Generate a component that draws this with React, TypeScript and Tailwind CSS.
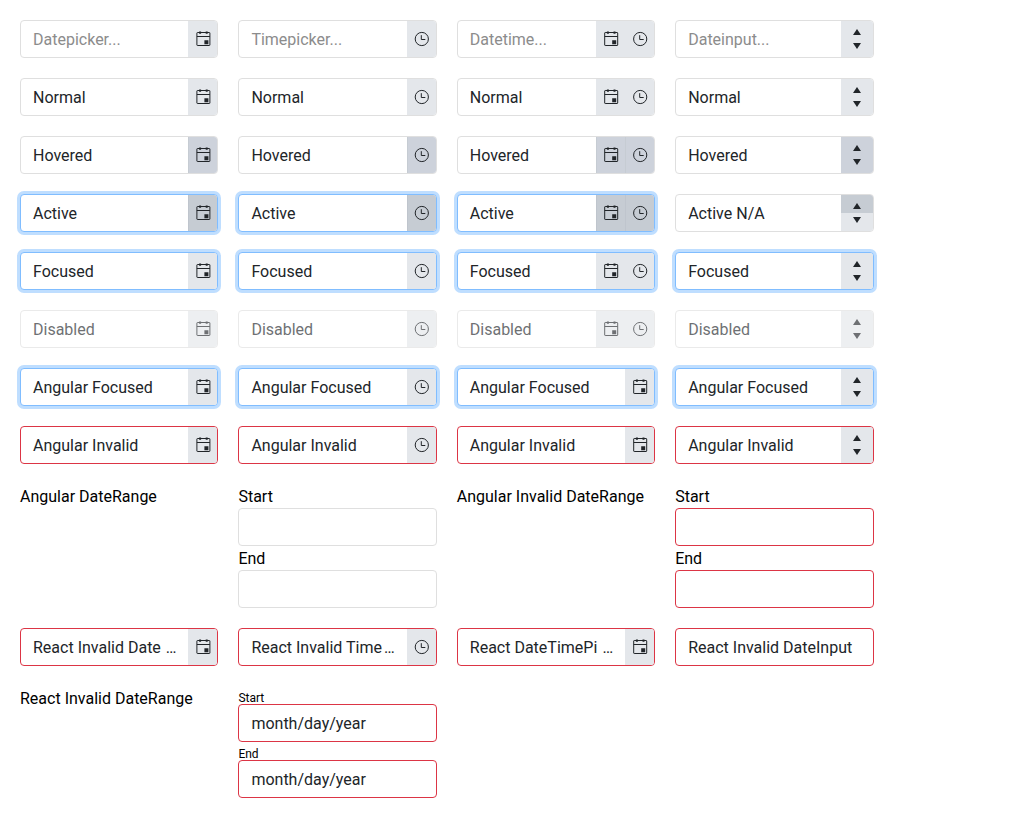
import type { ReactNode } from 'react';
import clsx from 'clsx';

type State = 'placeholder' | 'normal' | 'hovered' | 'active' | 'focused' | 'disabled' | 'invalid';
type Kind = 'date' | 'time' | 'datetime' | 'spin' | 'plain';

// Sub-pixel remainder of each column's icon position.
const iconShift = [0.4, -0.2, 0.2, 0];

const CalendarIcon = ({ shift }: { shift: number }) => (
  <svg className="block size-4 shrink-0 overflow-visible" viewBox="0 0 16 16" fill="currentColor">
    <g transform={`translate(${shift} 0)`}>
      <rect x="1.500" y="1.500" width="13" height="13" rx=".5" fill="none" stroke="currentColor" />
      <path d="M1.500 5h13v1h-13zM3.700 .5h2v2.200h-2zM10.300 .5h2v2.200h-2zM9 9.200h4v4H9z" />
    </g>
  </svg>
);

const ClockIcon = ({ shift }: { shift: number }) => (
  <svg className="block size-4 shrink-0 overflow-visible" viewBox="0 0 16 16" fill="none" stroke="currentColor">
    <g transform={`translate(${shift} 0)`}>
      <circle cx="8" cy="8" r="6.600" />
      <path d="M7.500 4.200v4.300H11.500" />
    </g>
  </svg>
);

const face: Record<State, string> = {
  placeholder: 'bg-[#e4e7eb] border-[#e4e7eb]',
  normal: 'bg-[#e4e7eb] border-[#e4e7eb]',
  focused: 'bg-[#e4e7eb] border-[#e4e7eb]',
  disabled: 'bg-[#e4e7eb] border-[#e4e7eb]',
  invalid: 'bg-[#e4e7eb] border-[#e4e7eb]',
  hovered: 'bg-[#cdd2db] border-[#c6ccd3]',
  active: 'bg-[#c6ccd3] border-[#bfc5cd]',
};

const frame: Record<State, string> = {
  placeholder: 'border-[#dfdfdf]',
  normal: 'border-[#dfdfdf]',
  hovered: 'border-[#dfdfdf]',
  disabled: 'border-[#dfdfdf] opacity-65',
  active: 'border-[#80bdff] shadow-[0_0_0_3px_#bfdeff]',
  focused: 'border-[#80bdff] shadow-[0_0_0_3px_#bfdeff]',
  invalid: 'border-[#dc3545]',
};

const Button = ({ state, children }: { state: State; children: ReactNode }) => (
  <div className={clsx('flex w-[29px] shrink-0 items-center justify-center border-l', face[state])}>
    {children}
  </div>
);

const Spinner = ({ state, upOnly }: { state: State; upOnly?: boolean }) => (
  <div className={clsx('flex w-8 shrink-0 flex-col', face[state])}>
    <div className={clsx('flex flex-1 items-end justify-center pb-1', upOnly && 'bg-[#c6ccd3]')}>
      <svg className="block h-1.5 w-2" viewBox="0 0 8 6" fill="currentColor">
        <path d="M4 0L8 6H0z" />
      </svg>
    </div>
    <div className="flex flex-1 items-start justify-center pt-1">
      <svg className="block h-1.5 w-2" viewBox="0 0 8 6" fill="currentColor">
        <path d="M0 0h8L4 6z" />
      </svg>
    </div>
  </div>
);

interface FieldProps {
  text?: string;
  state?: State;
  kind?: Kind;
  clipped?: boolean;
  upOnly?: boolean;
  shift?: number;
}

const Field = ({ text, state = 'normal', kind = 'plain', clipped, upOnly, shift = 0 }: FieldProps) => (
  <div className={clsx('flex h-[38px] overflow-hidden rounded border bg-white text-[#212529]', frame[state])}>
    <div
      className={clsx(
        'flex min-w-0 flex-1 items-center justify-between px-3 pt-0.5 whitespace-nowrap',
        state === 'placeholder' && 'text-[#8c8c8c]',
      )}
    >
      <span>{text}</span>
      {clipped && <span>…</span>}
    </div>
    {(kind === 'date' || kind === 'datetime') && <Button state={state}><CalendarIcon shift={shift} /></Button>}
    {(kind === 'time' || kind === 'datetime') && <Button state={state}><ClockIcon shift={shift} /></Button>}
    {kind === 'spin' && <Spinner state={state} upOnly={upOnly} />}
  </div>
);

const allKinds: Kind[] = ['date', 'time', 'datetime', 'spin'];
const angularKinds: Kind[] = ['date', 'time', 'date', 'spin'];

const makeRow = (text: string, state: State, kinds: Kind[]): FieldProps[] =>
  kinds.map((kind) => ({ text, state, kind }));

const rows: FieldProps[][] = [
  [
    { text: 'Datepicker...', state: 'placeholder', kind: 'date' },
    { text: 'Timepicker...', state: 'placeholder', kind: 'time' },
    { text: 'Datetime...', state: 'placeholder', kind: 'datetime' },
    { text: 'Dateinput...', state: 'placeholder', kind: 'spin' },
  ],
  makeRow('Normal', 'normal', allKinds),
  makeRow('Hovered', 'hovered', allKinds),
  [
    ...makeRow('Active', 'active', ['date', 'time', 'datetime']),
    { text: 'Active N/A', state: 'normal', kind: 'spin', upOnly: true },
  ],
  makeRow('Focused', 'focused', allKinds),
  makeRow('Disabled', 'disabled', allKinds),
  makeRow('Angular Focused', 'focused', angularKinds),
  makeRow('Angular Invalid', 'invalid', angularKinds),
];

const Label = ({ children }: { children: ReactNode }) => <div className="h-6 leading-[26px]">{children}</div>;

const Range = ({ state, text, small }: { state: State; text?: string; small?: boolean }) => (
  <div className="flex flex-col">
    {['Start', 'End'].map((label) => (
      <div key={label}>
        {small ? <div className="pt-1.5 text-xs leading-3">{label}</div> : <Label>{label}</Label>}
        <Field state={state} text={text} />
      </div>
    ))}
  </div>
);

export default function App() {
  return (
    <div className="h-[818px] bg-white p-5 font-['Roboto',sans-serif] text-base leading-6 text-black">
      <div className="grid grid-cols-[repeat(4,198.4px)] gap-5">
        {rows.flat().map((field, i) => (
          <Field key={i} {...field} shift={iconShift[i % 4]} />
        ))}
        <Label>Angular DateRange</Label>
        <Range state="normal" />
        <Label>Angular Invalid DateRange</Label>
        <Range state="invalid" />
        <Field text="React Invalid Date" state="invalid" kind="date" clipped shift={iconShift[0]} />
        <Field text="React Invalid Time" state="invalid" kind="time" clipped shift={iconShift[1]} />
        <Field text="React DateTimePi" state="invalid" kind="date" clipped shift={iconShift[2]} />
        <Field text="React Invalid DateInput" state="invalid" />
        <Label>React Invalid DateRange</Label>
        <Range state="invalid" text="month/day/year" small />
      </div>
    </div>
  );
}
